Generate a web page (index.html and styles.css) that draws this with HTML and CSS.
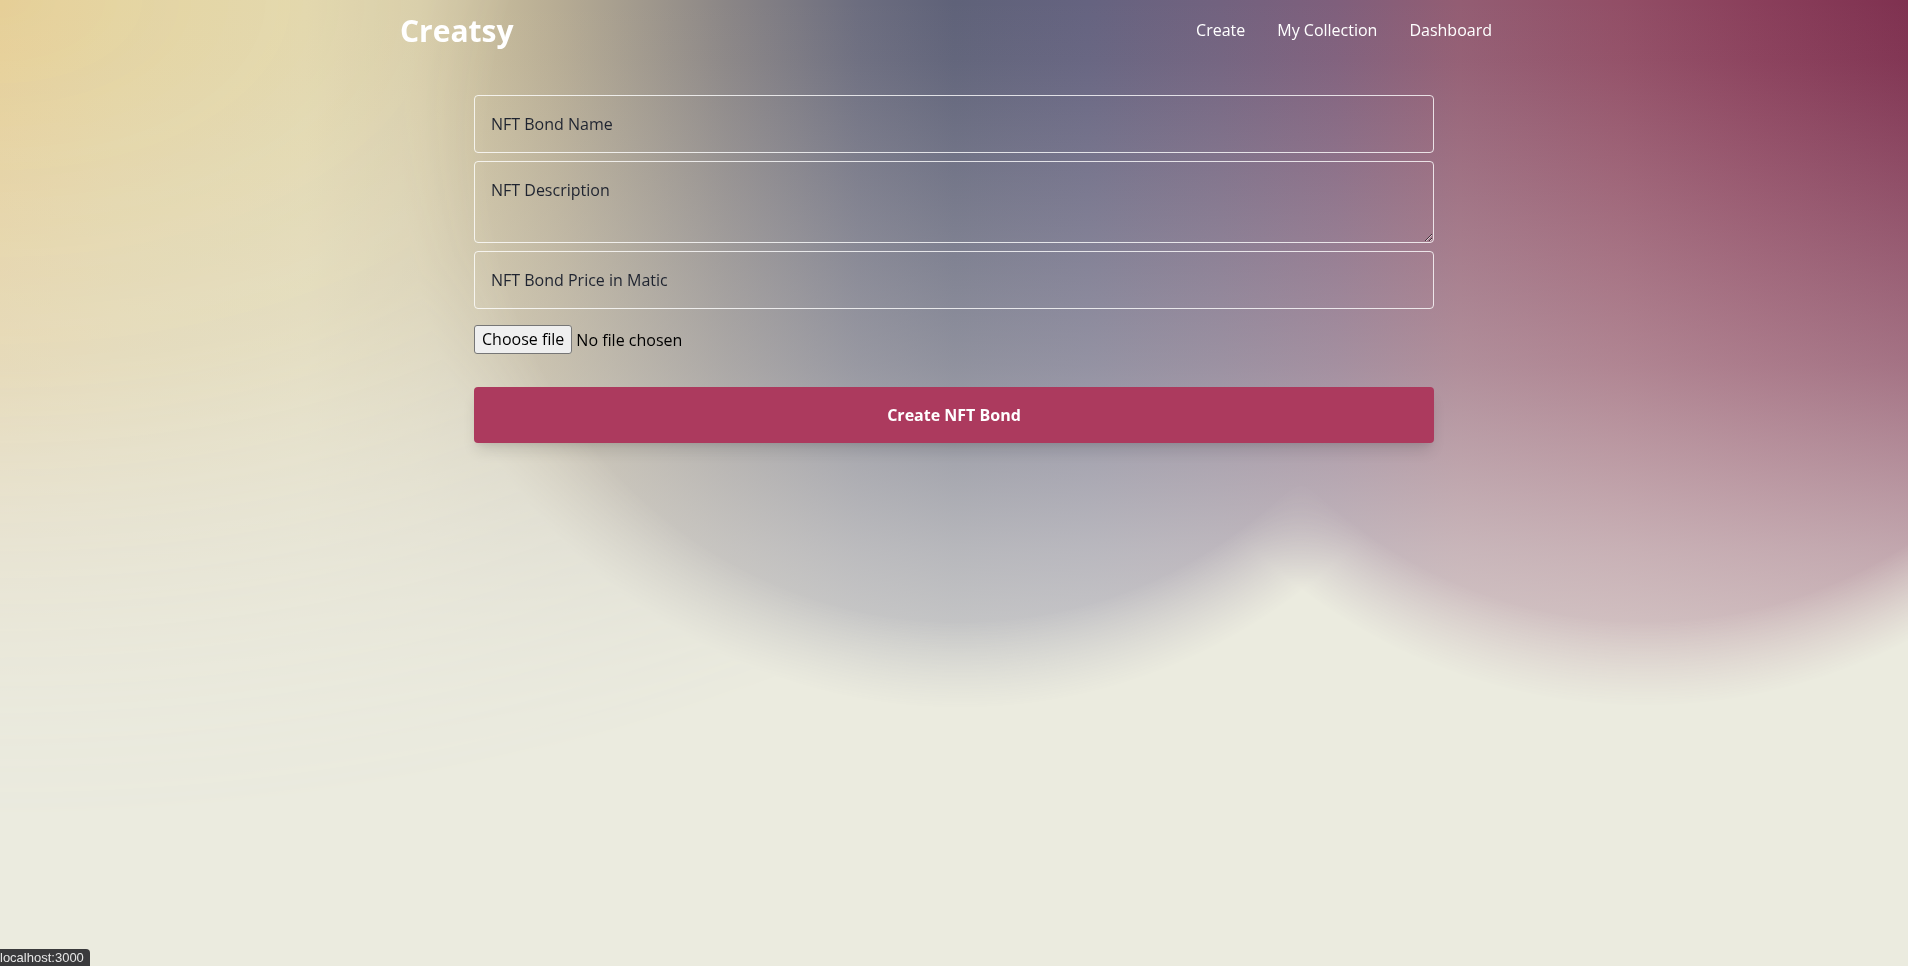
FILE: index.html
```html
<!DOCTYPE html>
<html lang="en">
<head>
<meta charset="utf-8">
<title>Creatsy</title>
<link rel="stylesheet" href="styles.css">
</head>
<body>
<div class="bg" aria-hidden="true">
  <div class="band"></div>
</div>
<header class="topbar">
  <a class="logo" href="#">Creatsy</a>
  <nav class="nav">
    <a href="#">Create</a>
    <a href="#">My Collection</a>
    <a href="#">Dashboard</a>
  </nav>
</header>
<main class="form">
  <input class="field" type="text" placeholder="NFT Bond Name">
  <textarea class="field area" rows="2" placeholder="NFT Description"></textarea>
  <input class="field" type="text" placeholder="NFT Bond Price in Matic">
  <div class="file-row">
    <label class="file-btn">Choose file<input class="file-input" type="file"></label>
    <span class="file-name">No file chosen</span>
  </div>
  <button class="submit" type="button">Create NFT Bond</button>
</main>
<div class="status">localhost:3000</div>
</body>
</html>
```
FILE: styles.css
```css
html, body {
  margin: 0;
  height: 100%;
}
body {
  font-family: "Open Sans", "Noto Sans", sans-serif;
  background: #ebebdf;
  position: relative;
  overflow: hidden;
}
.bg {
  position: fixed;
  inset: 0;
  overflow: hidden;
  z-index: 0;
  background: #ebebdf;
}
.band {
  position: absolute;
  left: 0;
  top: 0;
  width: 100%;
  height: 820px;
  background:
    linear-gradient(to bottom,
      rgba(228,227,222,0) 0px,
      rgba(228,227,222,0.03) 60px,
      rgba(228,227,222,0.37) 365px,
      rgba(228,227,222,0.66) 548px,
      rgba(232,232,224,0.85) 720px),
    linear-gradient(to right,
      #e6cf97 0%,
      #e4d39f 6%,
      #e2d6a8 16%,
      #d6caa3 22%,
      #b8ad94 29%,
      #8b8686 38%,
      #6c6d7f 45%,
      #5f6279 50%,
      #656380 57%,
      #72627f 64%,
      #7f5f7c 70%,
      #935d73 76.5%,
      #924e66 85%,
      #8a3f5b 92%,
      #7f3150 100%);
  -webkit-mask-image:
    radial-gradient(circle at 960px 150px, #000 0, #000 472px, transparent 558px),
    radial-gradient(circle at 1645px 140px, #000 0, #000 482px, transparent 566px),
    radial-gradient(ellipse 1400px 820px at 0 0, #000 0%, rgba(0,0,0,0.8) 45%, transparent 100%);
  mask-image:
    radial-gradient(circle at 960px 150px, #000 0, #000 472px, transparent 558px),
    radial-gradient(circle at 1645px 140px, #000 0, #000 482px, transparent 566px),
    radial-gradient(ellipse 1400px 820px at 0 0, #000 0%, rgba(0,0,0,0.8) 45%, transparent 100%);
}
.topbar {
  position: relative;
  z-index: 1;
  width: 1092px;
  margin-left: 400px;
  padding: 13px 0 15px;
  display: flex;
  justify-content: space-between;
  align-items: center;
}
.logo {
  color: #fff;
  text-decoration: none;
  font-size: 30px;
  line-height: 36px;
  font-weight: 700;
}
.nav {
  display: flex;
  gap: 32px;
  padding-bottom: 2px;
}
.nav a {
  color: #fff;
  text-decoration: none;
  font-size: 16px;
  line-height: 24px;
}
.form {
  position: relative;
  z-index: 1;
  width: 960px;
  margin: 31px auto 0;
  display: flex;
  flex-direction: column;
}
.field {
  display: block;
  box-sizing: border-box;
  width: 100%;
  margin: 0 0 8px;
  padding: 16px;
  border: 1px solid rgba(255,255,255,0.8);
  border-radius: 4px;
  background: transparent;
  font-family: inherit;
  font-size: 16px;
  line-height: 24px;
  color: #1f2430;
  outline: none;
}
.field::placeholder {
  color: #1f2430;
  opacity: 1;
}
.area {
  height: 82px;
}
.file-row {
  margin-top: 8px;
  display: flex;
  align-items: center;
  gap: 4px;
}
.file-btn {
  display: inline-block;
  box-sizing: border-box;
  height: 29px;
  padding: 0 7px;
  border: 1px solid #767676;
  border-radius: 3px;
  background: #efefef;
  color: #000;
  font-size: 16px;
  line-height: 27px;
  cursor: default;
}
.file-input {
  display: none;
}
.file-name {
  font-size: 16px;
  color: #000;
}
.submit {
  margin-top: 33px;
  height: 56px;
  border: none;
  border-radius: 4px;
  background: #ac3a5e;
  color: #fff;
  font-family: inherit;
  font-weight: 700;
  font-size: 16px;
  box-shadow: 0 10px 15px -3px rgba(0,0,0,0.12), 0 4px 6px -2px rgba(0,0,0,0.06);
  cursor: pointer;
}
.status {
  position: fixed;
  left: -5px;
  bottom: 0;
  z-index: 2;
  background: #3a3a3c;
  color: #e6e6e6;
  font-family: "Liberation Sans", sans-serif;
  font-size: 13px;
  line-height: 17px;
  padding: 0 6px 0 5px;
  border-top-right-radius: 4px;
}
```
